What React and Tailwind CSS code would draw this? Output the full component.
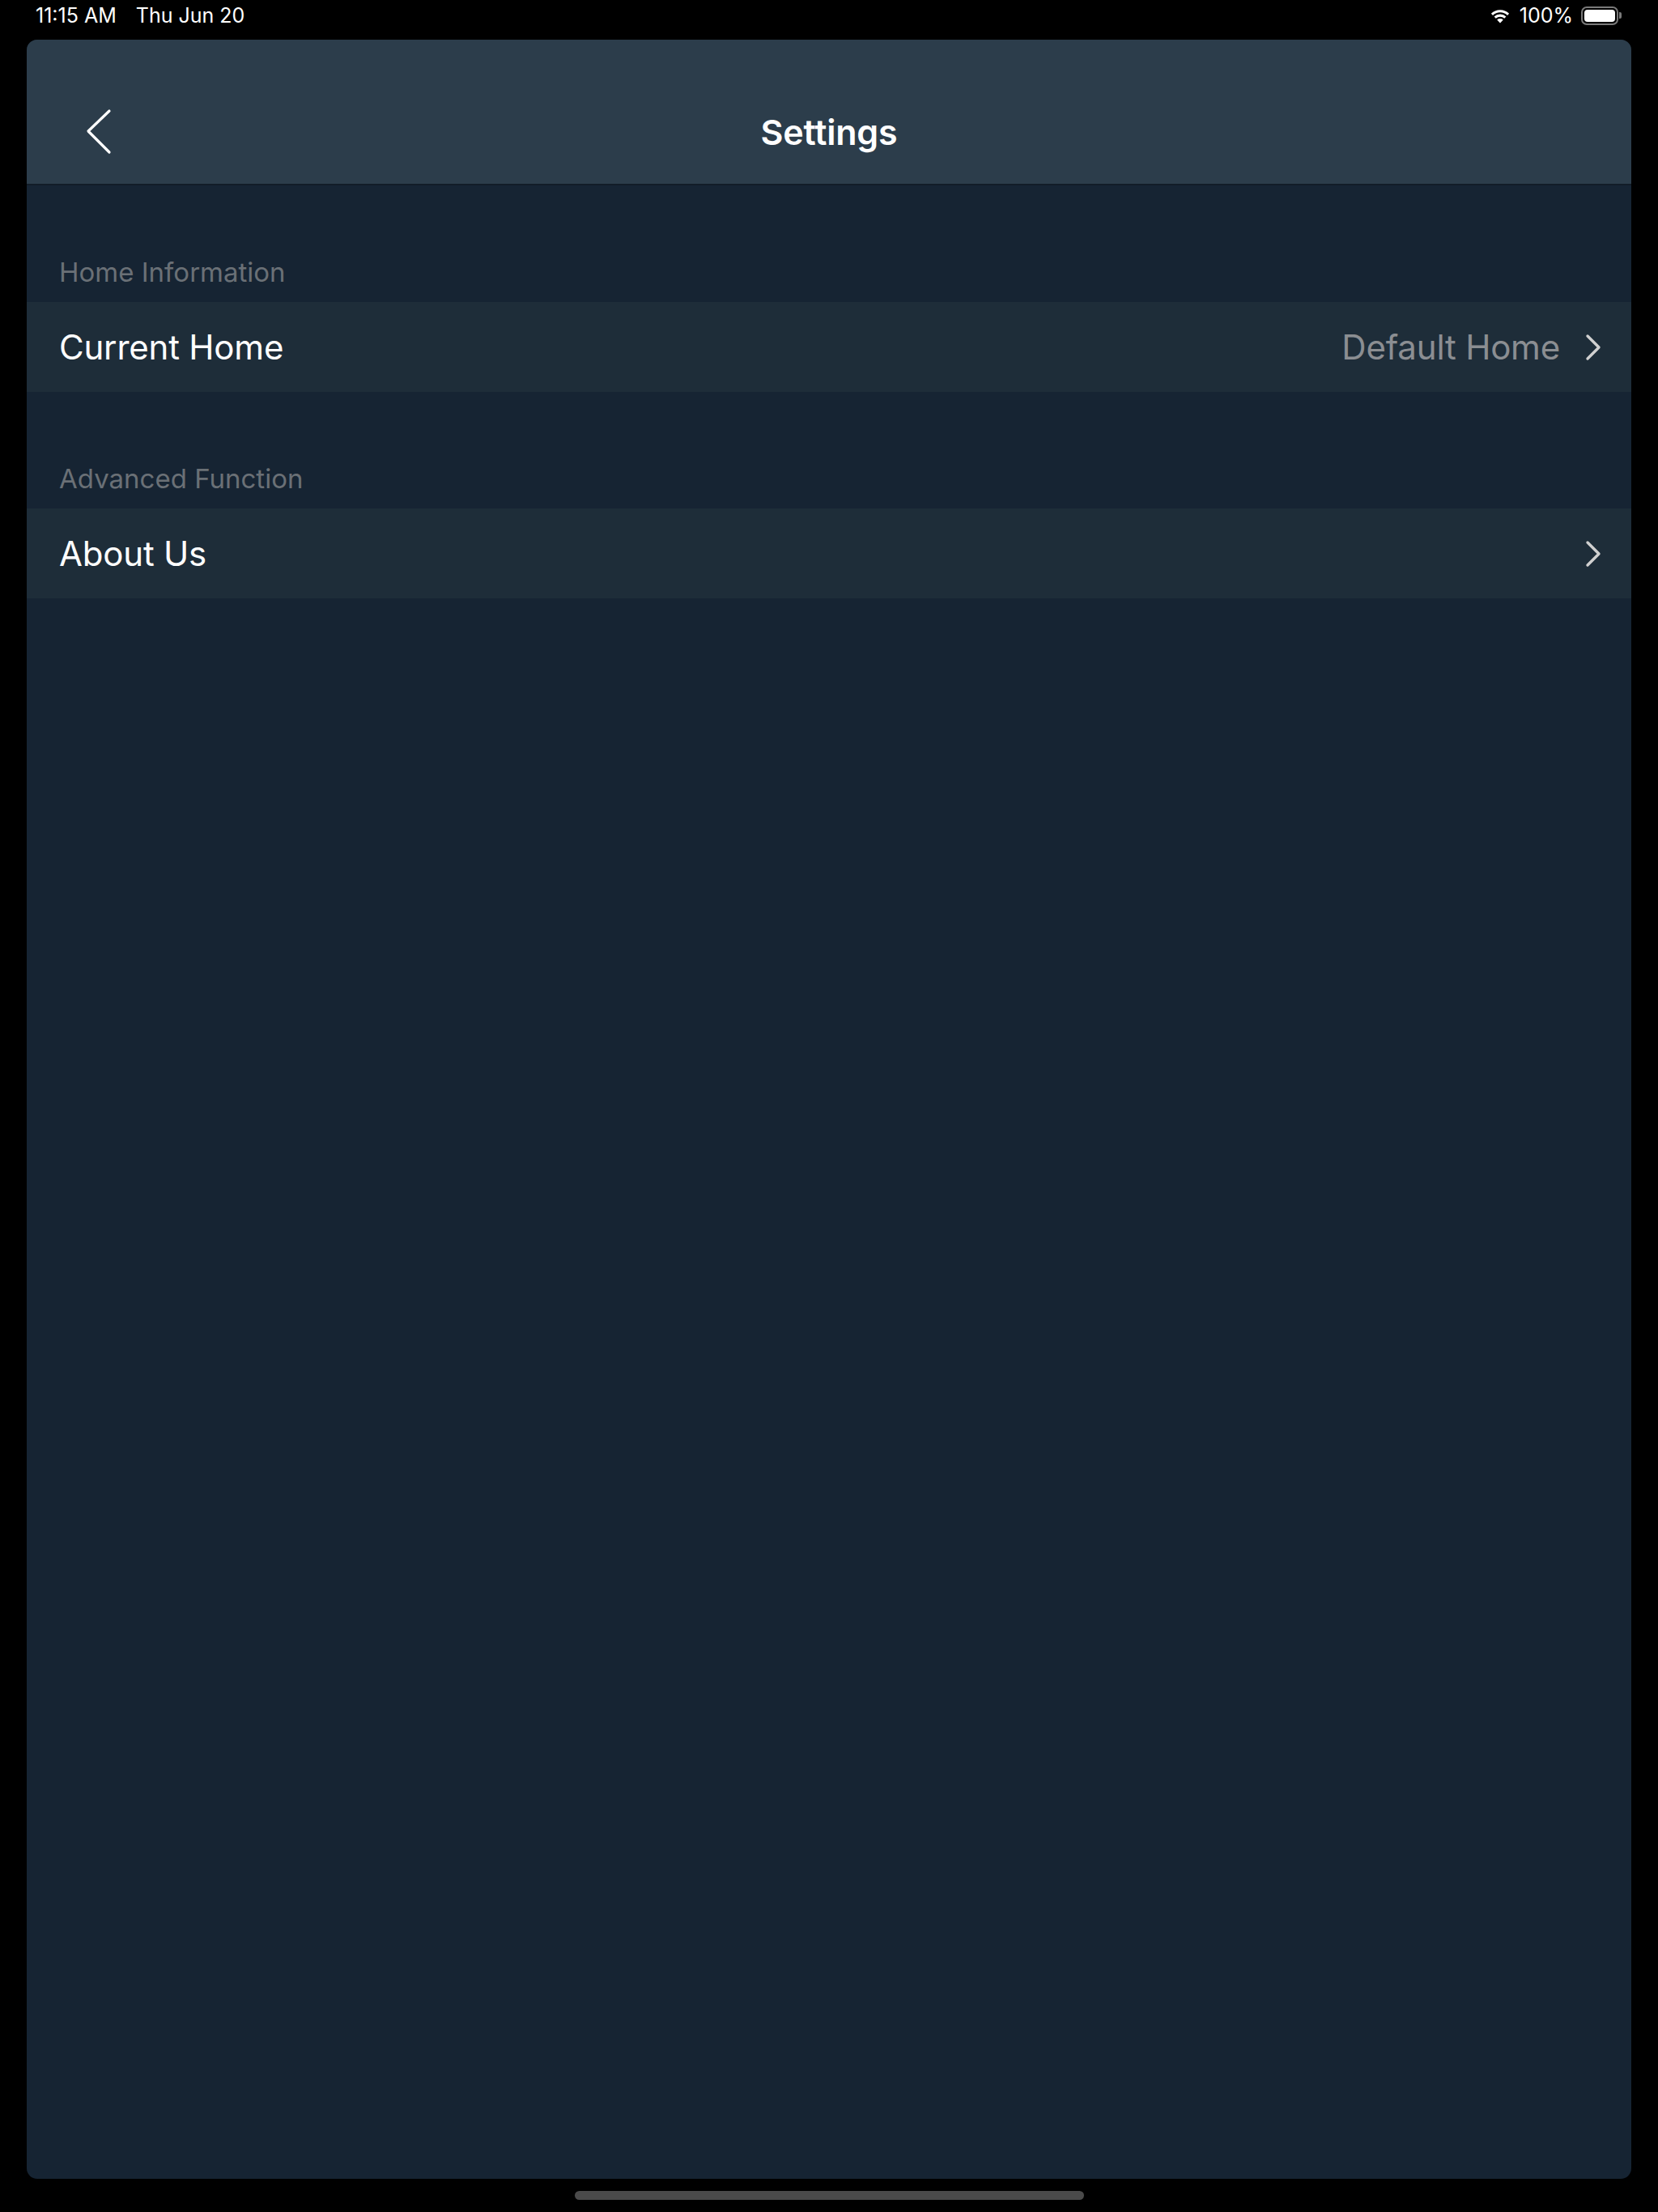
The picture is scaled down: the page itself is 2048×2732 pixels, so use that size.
import React from "react";

const font = { fontFamily: "Inter, 'Noto Sans', 'Liberation Sans', sans-serif" };

function Wifi() {
  return (
    <svg width="28" height="20" viewBox="0 0 28 20" fill="white">
      <path d="M14 19.5 L10.2 15.4 A5.6 5.6 0 0 1 17.8 15.4 Z" />
      <path d="M6.6 11.6 A10.6 10.6 0 0 1 21.4 11.6 L19.3 13.8 A7.6 7.6 0 0 0 8.7 13.8 Z" />
      <path d="M2.9 7.8 A15.8 15.8 0 0 1 25.1 7.8 L23.0 10.0 A12.8 12.8 0 0 0 5.0 10.0 Z" />
    </svg>
  );
}

function Battery() {
  return (
    <div className="flex items-center">
      <div className="w-[46px] h-[23px] rounded-[7px] border-[2px] border-[#7a7a7a] p-[2px]">
        <div className="w-full h-full rounded-[4px] bg-white" />
      </div>
      <div className="w-[3px] h-[8px] rounded-r-[2px] bg-[#7a7a7a] ml-[1px]" />
    </div>
  );
}

function Chevron() {
  return (
    <svg width="22" height="34" viewBox="0 0 22 34" fill="none">
      <path d="M4 3 L18 17 L4 31" stroke="#d0d0d0" strokeWidth="3.4" strokeLinecap="round" strokeLinejoin="round" />
    </svg>
  );
}

function BackArrow() {
  return (
    <svg width="34" height="58" viewBox="0 0 34 58" fill="none">
      <path d="M30 3 L4 28 L30 54" stroke="white" strokeWidth="3.2" strokeLinecap="round" strokeLinejoin="round" />
    </svg>
  );
}

function SectionLabel({ children }) {
  return (
    <div className="h-[144px] flex items-end px-[40px] pb-[17px]">
      <span className="text-[33px] leading-[40px] text-[#6a7076]">{children}</span>
    </div>
  );
}

function Row({ label, value }) {
  return (
    <div className="h-[111px] bg-[#1e2d39] flex items-center pl-[40px] pr-[36px]">
      <span className="text-[42px] text-white flex-1 tracking-[-0.2px]">{label}</span>
      {value && <span className="text-[42px] text-[#8b8e92] mr-[30px] tracking-[-0.2px]">{value}</span>}
      <Chevron />
    </div>
  );
}

export default function App() {
  return (
    <div className="w-[2048px] h-[2732px] bg-black flex flex-col" style={font}>
      <div className="h-[49px] flex items-start justify-between pl-[44px] pr-[45px] pt-[3px] text-white text-[25px] leading-[32px] shrink-0">
        <div className="flex gap-[24px]">
          <span>11:15 AM</span>
          <span>Thu Jun 20</span>
        </div>
        <div className="flex items-center gap-[10px]">
          <Wifi />
          <span>100%</span>
          <Battery />
        </div>
      </div>
      <div className="flex-1 mx-[33px] rounded-[13px] overflow-hidden bg-[#162433] flex flex-col">
        <div className="h-[180px] shrink-0 bg-[#2c3d4b] border-b-[2px] border-[#121d28] pt-[50px] pl-[72px] pr-[72px] grid grid-cols-[200px_1fr_200px] items-center">
          <div className="flex items-center">
            <BackArrow />
          </div>
          <div className="text-center text-white text-[43px] leading-[52px] font-semibold tracking-[-0.2px]">Settings</div>
          <div />
        </div>
        <SectionLabel>Home Information</SectionLabel>
        <Row label="Current Home" value="Default Home" />
        <SectionLabel>Advanced Function</SectionLabel>
        <Row label="About Us" />
      </div>
      <div className="h-[41px] shrink-0 flex items-center justify-center">
        <div className="w-[629px] h-[11px] rounded-full bg-[#4a4a4a]" />
      </div>
    </div>
  );
}
